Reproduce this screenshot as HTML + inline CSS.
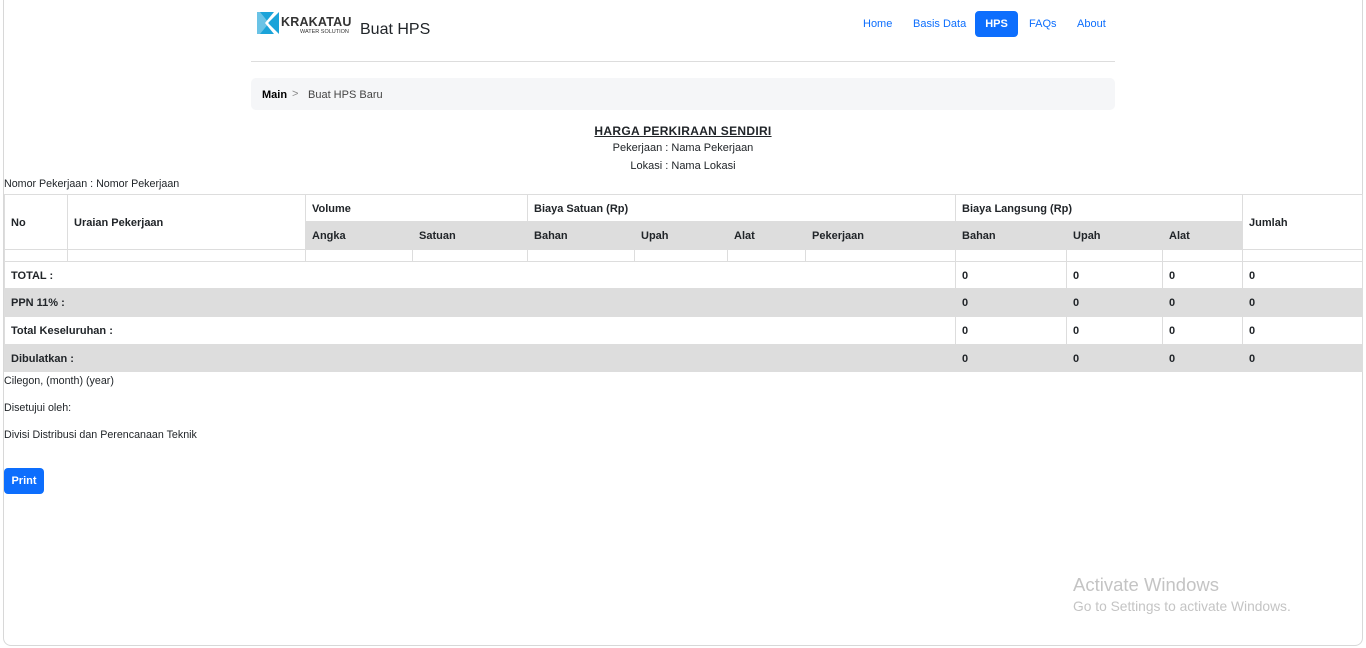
<!DOCTYPE html>
<html><head><meta charset="utf-8"><style>
*{box-sizing:border-box;margin:0;padding:0}
body{width:1366px;height:648px;background:#fff;font-family:"Liberation Sans",Arial,sans-serif;color:#212529;position:relative;overflow:hidden}
.frame{position:absolute;left:3px;top:-10px;width:1360px;height:656px;border:1px solid #d8d8d8;border-radius:8px}
.a{position:absolute;white-space:nowrap}
.nav a{position:absolute;top:11px;height:26px;line-height:27px;font-size:11px;color:#0d6efd;text-decoration:none}
table{position:absolute;left:4px;top:194px;border-collapse:collapse;table-layout:fixed;width:1358px;font-size:11px;font-weight:bold}
td{border:1px solid #ddd;padding:1px 6px 0;vertical-align:middle}
.g td,td.g{background:#ddd}
</style></head><body>
<div class="frame"></div>
<svg class="a" style="left:257px;top:12px" width="22" height="22" viewBox="0 0 22 22"><rect width="22" height="22" fill="#1ba3d9"/><path d="M3 0 L12 11 L3 22 L0 22 L0 0Z" fill="#fff" opacity=".35"/><path d="M22 0 L13 9 L11 11 L22 22 L17 22 L8 11 L17 0Z" fill="#fff"/></svg>
<div class="a" style="left:281px;top:15px;font-size:12.5px;font-weight:bold;color:#333;letter-spacing:.2px">KRAKATAU</div>
<div class="a" style="left:300px;top:29px;font-size:5.5px;color:#333">WATER SOLUTION</div>
<div class="a" style="left:360px;top:21px;font-size:16px;color:#212529">Buat HPS</div>
<div class="nav">
<a style="left:863px">Home</a>
<a style="left:913px">Basis Data</a>
<a style="left:975px;width:43px;background:#0d6efd;color:#fff;border-radius:4px;text-align:center;font-weight:bold">HPS</a>
<a style="left:1029px">FAQs</a>
<a style="left:1077px">About</a>
</div>
<div class="a" style="left:251px;top:61px;width:864px;height:1px;background:#ddd"></div>
<div class="a" style="left:251px;top:78px;width:864px;height:32px;background:#f5f6f8;border-radius:5px"></div>
<div class="a" style="left:262px;top:89px;font-size:11px;font-weight:bold;color:#000">Main</div>
<div class="a" style="left:292px;top:88px;font-size:11px;color:#888">&gt;</div>
<div class="a" style="left:308px;top:89px;font-size:11px;color:#444">Buat HPS Baru</div>
<div class="a" style="left:0;width:1366px;top:124px;text-align:center;font-size:12px;font-weight:bold;text-decoration:underline;letter-spacing:.3px">HARGA PERKIRAAN SENDIRI</div>
<div class="a" style="left:0;width:1366px;top:142px;text-align:center;font-size:11px">Pekerjaan : Nama Pekerjaan</div>
<div class="a" style="left:0;width:1366px;top:160px;text-align:center;font-size:11px">Lokasi : Nama Lokasi</div>
<div class="a" style="left:4px;top:178px;font-size:10.7px">Nomor Pekerjaan : Nomor Pekerjaan</div>
<table>
<colgroup><col style="width:63px"><col style="width:238px"><col style="width:107px"><col style="width:115px"><col style="width:107px"><col style="width:93px"><col style="width:78px"><col style="width:150px"><col style="width:111px"><col style="width:96px"><col style="width:80px"><col style="width:120px"></colgroup>
<tr style="height:27px"><td rowspan="2">No</td><td rowspan="2">Uraian Pekerjaan</td><td colspan="2">Volume</td><td colspan="4">Biaya Satuan (Rp)</td><td colspan="3">Biaya Langsung (Rp)</td><td rowspan="2">Jumlah</td></tr>
<tr style="height:28px" class="g"><td>Angka</td><td>Satuan</td><td>Bahan</td><td>Upah</td><td>Alat</td><td>Pekerjaan</td><td>Bahan</td><td>Upah</td><td>Alat</td></tr>
<tr style="height:12px"><td></td><td></td><td></td><td></td><td></td><td></td><td></td><td></td><td></td><td></td><td></td><td></td></tr>
<tr style="height:27px"><td colspan="8">TOTAL :</td><td>0</td><td>0</td><td>0</td><td>0</td></tr>
<tr style="height:28px" class="g"><td colspan="8">PPN 11% :</td><td>0</td><td>0</td><td>0</td><td>0</td></tr>
<tr style="height:28px"><td colspan="8">Total Keseluruhan :</td><td>0</td><td>0</td><td>0</td><td>0</td></tr>
<tr style="height:27px" class="g"><td colspan="8">Dibulatkan :</td><td>0</td><td>0</td><td>0</td><td>0</td></tr>
</table>
<div class="a" style="left:4px;top:375px;font-size:10.7px">Cilegon, (month) (year)</div>
<div class="a" style="left:4px;top:402px;font-size:10.7px">Disetujui oleh:</div>
<div class="a" style="left:4px;top:429px;font-size:10.7px">Divisi Distribusi dan Perencanaan Teknik</div>
<div class="a" style="left:4px;top:468px;width:40px;height:26px;background:#0d6efd;color:#fff;border-radius:4px;font-size:11px;font-weight:bold;line-height:27px;text-align:center">Print</div>
<div class="a" style="left:1073px;top:574px;font-size:18.5px;color:#c4c4c4">Activate Windows</div>
<div class="a" style="left:1073px;top:599px;font-size:13.8px;color:#c4c4c4">Go to Settings to activate Windows.</div>
</body></html>
